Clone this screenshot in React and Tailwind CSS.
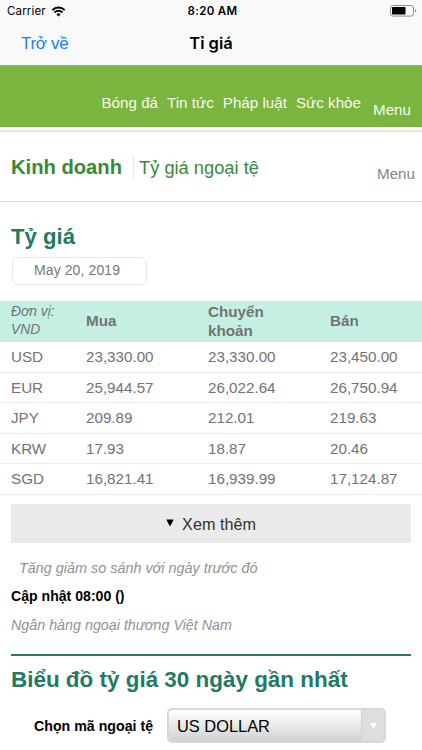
import React, { useState } from 'react'

const rates = [
  { code: 'USD', buy: '23,330.00', transfer: '23,330.00', sell: '23,450.00' },
  { code: 'EUR', buy: '25,944.57', transfer: '26,022.64', sell: '26,750.94' },
  { code: 'JPY', buy: '209.89', transfer: '212.01', sell: '219.63' },
  { code: 'KRW', buy: '17.93', transfer: '18.87', sell: '20.46' },
  { code: 'SGD', buy: '16,821.41', transfer: '16,939.99', sell: '17,124.87' },
]

const StatusBar = () => {
  return (
    <div className="h-5 flex items-center justify-between pl-[7px] pr-[5px] pt-[2px] font-[Inter,sans-serif] text-[11.5px] text-black">
      <div className="w-[120px] flex items-center gap-[5px] pt-px">
        <span className="tracking-[0.15px]">Carrier</span>
        <svg width="15" height="11" viewBox="0 0 14 11" fill="none" stroke="#000" strokeWidth="2" className="-mt-px">
          <path d="M0.8 4.1a8.8 8.8 0 0 1 12.4 0" />
          <path d="M3 6.5a5.7 5.7 0 0 1 8 0" />
          <path d="M7 10.6L4.9 8.4a3 3 0 0 1 4.2 0z" fill="#000" stroke="none" />
        </svg>
      </div>
      <span className="pt-px pl-px font-semibold tracking-[0.35px]">8:20 AM</span>
      <div className="w-[120px] flex justify-end">
        <svg width="27" height="12" viewBox="0 0 27 12">
          <rect x="0.5" y="0.5" width="23" height="10.6" rx="2.5" fill="none" stroke="#8e8e8e" />
          <rect x="2" y="2" width="13.5" height="7.6" rx="0.8" fill="#000" />
          <path d="M25 4v3.6c1.6-.5 1.6-3.1 0-3.6z" fill="#8e8e8e" />
        </svg>
      </div>
    </div>
  )
}

const NavBar = () => {
  return (
    <div className="h-[45px] grid grid-cols-3 items-center pt-[2px]">
      <button className="pl-[21px] text-left text-[17px] text-[#1b7fee] tracking-[-0.3px]">Trở về</button>
      <div className="text-center font-[Inter,sans-serif] text-[16.5px] font-semibold text-black">Tỉ giá</div>
    </div>
  )
}

const TopMenu = () => {
  return (
    <nav className="h-[62px] border-t border-[#8ab65d] bg-[#7bb43e] flex items-end justify-end pr-[11px] leading-[18px] text-[#f6faef] whitespace-nowrap">
      <div className="flex gap-[9px] pb-[15px] pr-[12px] text-[15.2px]">
        <span>Bóng đá</span>
        <span>Tin tức</span>
        <span>Pháp luật</span>
        <span>Sức khỏe</span>
      </div>
      <span className="pb-2 text-[15.2px]">Menu</span>
    </nav>
  )
}

const Category = () => {
  return (
    <div className="mt-[3px] h-[72px] border-t-2 border-b border-t-[#e5e5e5] border-b-[#dcdcdc] flex items-start pl-[11px] pr-[7px] whitespace-nowrap">
      <div className="mt-[22px] w-[112px] text-[20.2px] leading-[26px] font-bold text-[#378a37]">Kinh doanh</div>
      <div className="mt-[24px] ml-[10px] h-[23px] border-l border-[#e6e6e6] pl-[5px] text-[18.3px] leading-[23px] text-[#378a37]">Tỷ giá ngoại tệ</div>
      <div className="mt-[33px] ml-auto text-[15.2px] leading-[18px] text-[#858585]">Menu</div>
    </div>
  )
}

const RateTable = () => {
  return (
    <table className="mt-4 w-full table-fixed text-left text-[15.2px] text-[#737373]">
      <colgroup>
        <col className="w-[86px]" />
        <col className="w-[122px]" />
        <col className="w-[122px]" />
        <col />
      </colgroup>
      <thead className="bg-[#c5efe3]">
        <tr className="h-[40.5px] leading-[18px]">
          <th className="pl-[11px] pr-5 text-[13.8px] font-normal italic">Đơn vị: VND</th>
          <th>Mua</th>
          <th className="pr-10 leading-[19px]">Chuyển khoản</th>
          <th>Bán</th>
        </tr>
      </thead>
      <tbody>
        {rates.map(rate => (
          <tr key={rate.code} className="h-[30.5px] border-b border-[#ececec] leading-5">
            <td className="pl-[11px] pt-px">{rate.code}</td>
            <td className="pt-px">{rate.buy}</td>
            <td className="pt-px">{rate.transfer}</td>
            <td className="pt-px">{rate.sell}</td>
          </tr>
        ))}
      </tbody>
    </table>
  )
}

const CurrencySelect = ({ currency }) => {
  return (
    <div className="mt-[14px] ml-[23px] flex items-center">
      <label className="w-[133px] pt-[3px] text-[14.2px] font-bold text-black whitespace-nowrap">Chọn mã ngoại tệ</label>
      <button className="w-[219px] h-[35px] flex overflow-hidden rounded-[5px] border-2 border-[#d8d8d8] bg-linear-to-b from-white to-[#d2d2d2] text-left text-[16.4px] leading-[33px] text-black">
        <span className="grow pl-2">{currency}</span>
        <span className="w-[23px] h-full flex items-center justify-center border-l border-[#d2d2d2] bg-[#dedede]">
          <svg width="9" height="8" viewBox="0 0 9 8">
            <path d="M0.5 0.5h8L4.5 7.5z" fill="#fff" stroke="#cfcfcf" strokeWidth="0.4" />
          </svg>
        </span>
      </button>
    </div>
  )
}

const App = () => {
  const [currency] = useState('US DOLLAR')

  return (
    <div className="w-full h-[750px] overflow-hidden bg-white font-['Liberation_Sans',sans-serif]">
      <header className="bg-[#f9f9f9]">
        <StatusBar />
        <NavBar />
      </header>
      <TopMenu />
      <Category />
      <h1 className="mt-[21px] ml-[11px] text-[22.2px] leading-[28px] font-bold text-[#237a62]">Tỷ giá</h1>
      <div className="mt-[6px] ml-[12px] w-[135px] h-[28px] rounded-[6px] border border-[#e8e8e8] pl-[21px] text-[14px] leading-[25px] text-[#777] tracking-[0.1px]">May 20, 2019</div>
      <RateTable />
      <div className="px-[11px]">
        <button className="mt-[9.5px] w-full h-[39px] flex items-center justify-center gap-2 bg-[#eaeaea] pt-px text-[16.2px] text-[#333]">
          <svg width="8" height="8" viewBox="0 0 8 8" className="-mt-[3px]">
            <path d="M0.3 0.5h7.4L4 7.5z" fill="#000" />
          </svg>
          Xem thêm
        </button>
        <p className="mt-[15px] ml-[8px] text-[14.4px] leading-5 italic text-[#929292]">Tăng giảm so sánh với ngày trước đó</p>
        <p className="mt-2 text-[14.1px] leading-5 font-bold text-black">Cập nhật 08:00 ()</p>
        <p className="mt-[9px] text-[14.3px] leading-5 italic text-[#929292]">Ngân hàng ngoại thương Việt Nam</p>
        <h2 className="mt-[19px] border-t-2 border-[#237a62] pt-[10px] text-[22.45px] leading-[28px] font-bold text-[#237a62] whitespace-nowrap">Biểu đồ tỷ giá 30 ngày gần nhất</h2>
        <CurrencySelect currency={currency} />
      </div>
    </div>
  )
}

export default App
